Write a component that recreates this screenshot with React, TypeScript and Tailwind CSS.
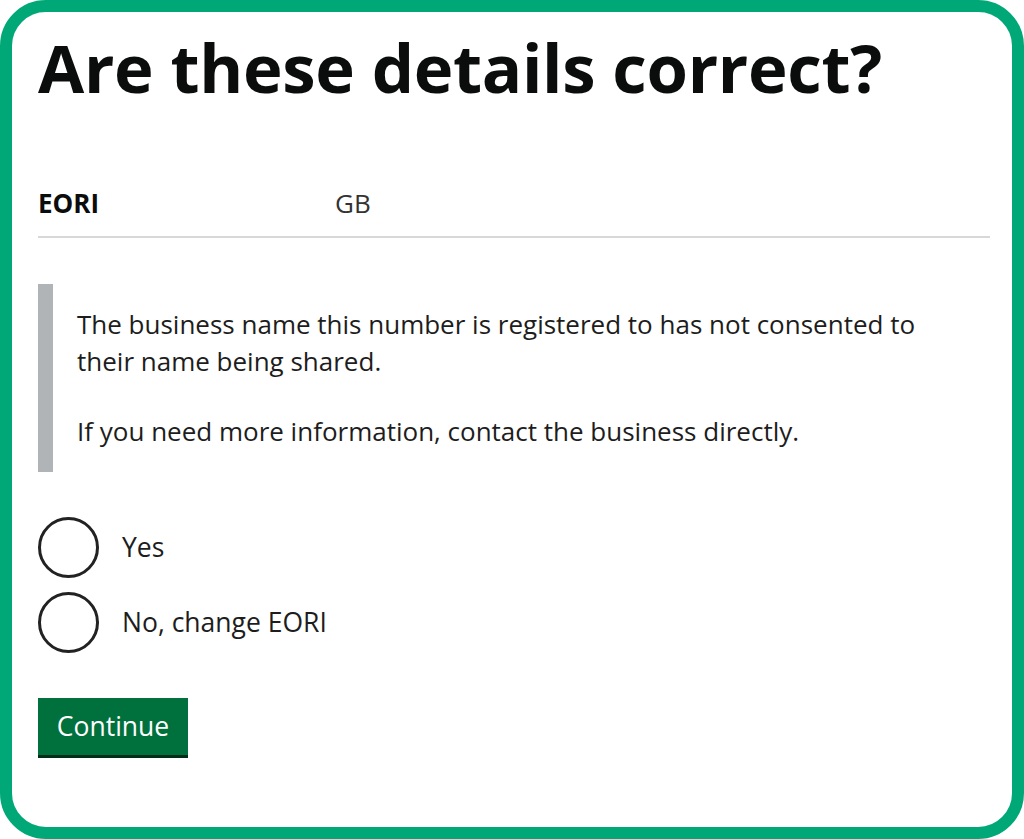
import React from "react";

export default function App() {
  return (
    <div className="w-[1024px] h-[839px] bg-white" style={{ fontFamily: '"Open Sans", "Liberation Sans", sans-serif' }}>
      <div className="w-full h-full rounded-[46px] border-[12px] border-[#00a878] bg-white pl-[26px] pr-[22px] text-[#0b0c0c]">
        <h1 className="pt-[18px] text-[67px] leading-[74px] font-bold tracking-[-0.3px]">Are these details correct?</h1>
        <div className="mt-[83px] flex border-b-2 border-[#d8d8d8] pb-[17px] text-[26px] leading-[32px]">
          <div className="w-[297px] font-bold">EORI</div>
          <div className="text-[#333]">GB</div>
        </div>
        <div className="mt-[46px] border-l-[15px] border-[#b1b4b6] pl-[24px] pt-[22px] pb-[22px] text-[26px] leading-[37px] text-[#1d1d1d]">
          <p>The business name this number is registered to has not consented to<br />their name being shared.</p>
          <p className="mt-[33px]">If you need more information, contact the business directly.</p>
        </div>
        <div className="mt-[45px] flex flex-col gap-[14px]">
          {["Yes", "No, change EORI"].map((l) => (
            <label key={l} className="flex items-center gap-[23px] text-[26.5px] text-[#1d1d1d]">
              <span className="w-[61px] h-[61px] rounded-full border-[3px] border-[#222]" />
              {l}
            </label>
          ))}
        </div>
        <button className="mt-[45px] w-[150px] h-[57px] bg-[#00703c] text-white text-[26.5px] shadow-[0_3px_0_#002d18]">Continue</button>
      </div>
    </div>
  );
}
